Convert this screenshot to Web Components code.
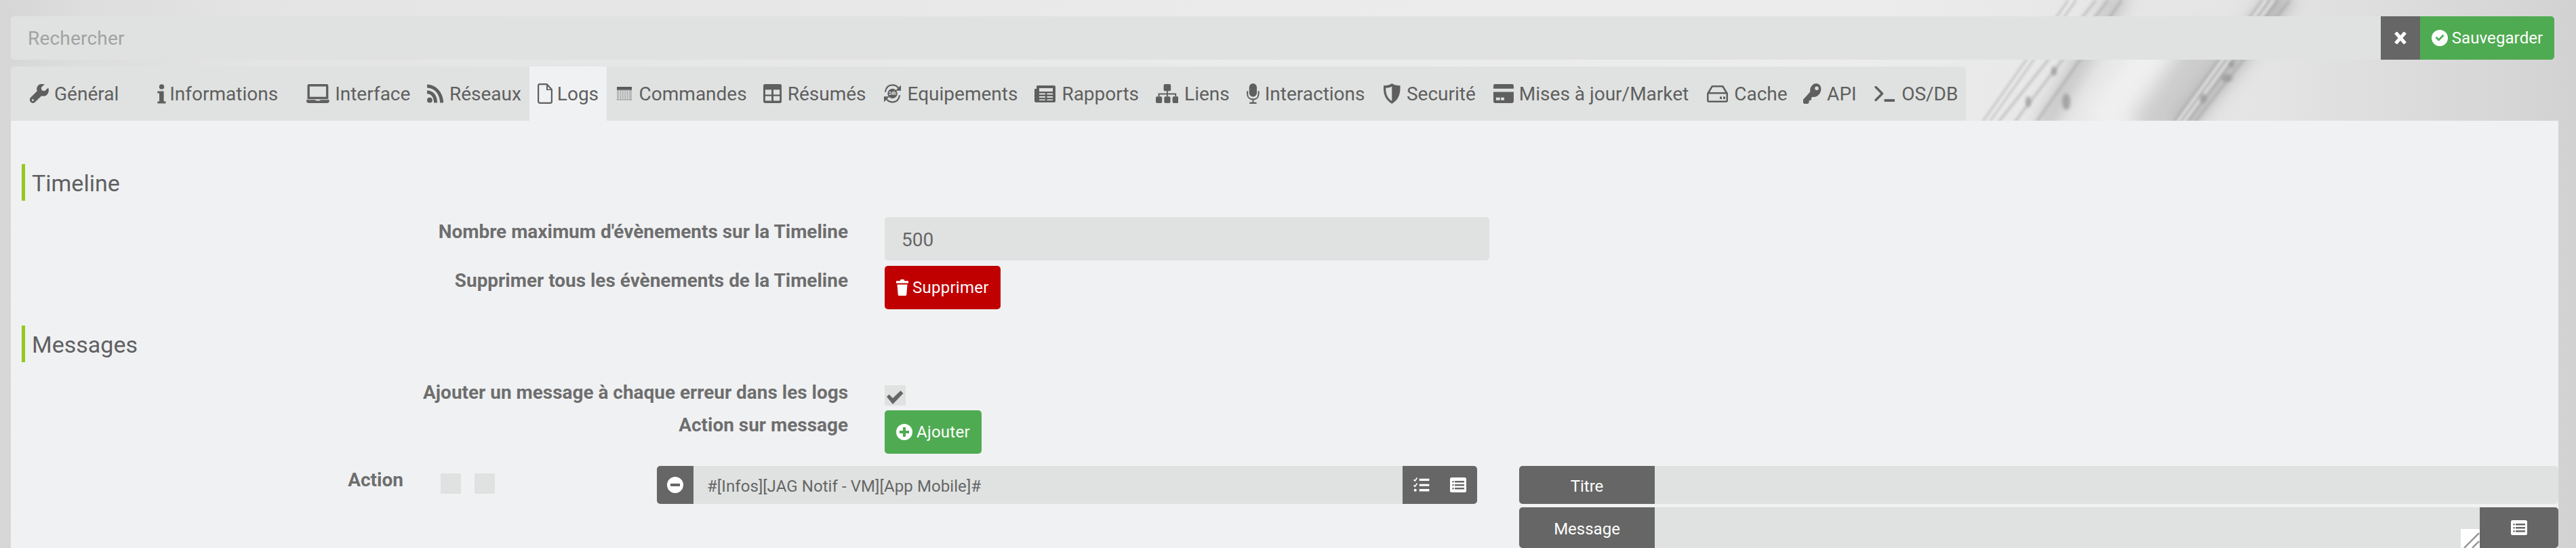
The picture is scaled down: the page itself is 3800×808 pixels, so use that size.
<!DOCTYPE html>
<html lang="fr"><head><meta charset="utf-8"><title>Configuration</title>
<style>
html,body{margin:0;height:808px;overflow:hidden;background:#dcdcdc}
body{font-family:Roboto,"Liberation Sans",sans-serif;color:#666}
</style></head><body>
<app-shell>
  <app-backdrop></app-backdrop>
  <search-bar placeholder="Rechercher"></search-bar>
  <tab-bar>
    <app-tab icon="wrench" style="--pl:27px;--iw:29px;--g:8px;--pr:12px">Général</app-tab>
    <app-tab icon="info" style="--pl:45px;--iw:13px;--g:5px;--pr:12px">Informations</app-tab>
    <app-tab icon="laptop" style="--pl:29px;--iw:35px;--g:8px;--pr:11.500px">Interface</app-tab>
    <app-tab icon="rss" style="--pl:13px;--iw:25px;--g:8px;--pr:12px">Réseaux</app-tab>
    <app-tab icon="file" active style="--pl:12px;--iw:22px;--g:7px;--pr:11.500px">Logs</app-tab>
    <app-tab icon="calendar" style="--pl:15px;--iw:22px;--g:11px;--pr:13px">Commandes</app-tab>
    <app-tab icon="table" style="--pl:11px;--iw:28px;--g:8px;--pr:12px">Résumés</app-tab>
    <app-tab icon="sync" style="--pl:13px;--iw:28px;--g:8px;--pr:12px">Equipements</app-tab>
    <app-tab icon="news" style="--pl:13px;--iw:31px;--g:9px;--pr:12px">Rapports</app-tab>
    <app-tab icon="sitemap" style="--pl:12px;--iw:35px;--g:8px;--pr:12px">Liens</app-tab>
    <app-tab icon="mic" style="--pl:13px;--iw:20px;--g:7px;--pr:13.500px">Interactions</app-tab>
    <app-tab icon="shield" style="--pl:13px;--iw:27px;--g:8px;--pr:12px">Securité</app-tab>
    <app-tab icon="card" style="--pl:14px;--iw:31px;--g:7px;--pr:12px">Mises à jour/Market</app-tab>
    <app-tab icon="hdd" style="--pl:15px;--iw:31px;--g:9px;--pr:12px">Cache</app-tab>
    <app-tab icon="key" style="--pl:10.500px;--iw:29px;--g:7px;--pr:12px">API</app-tab>
    <app-tab icon="terminal" style="--pl:11.500px;--iw:35px;--g:8px;--pr:12px">OS/DB</app-tab>
  </tab-bar>
  <main-panel>
    <section-title style="margin-top:64px">Timeline</section-title>
    <form-row label="Nombre maximum d'évènements sur la Timeline" style="margin-top:24px">
      <text-field value="500"></text-field>
    </form-row>
    <form-row label="Supprimer tous les évènements de la Timeline" style="margin-top:8px">
      <icon-button icon="trash" bg="#c00000">Supprimer</icon-button>
    </form-row>
    <section-title style="margin-top:24px">Messages</section-title>
    <form-row label="Ajouter un message à chaque erreur dans les logs" style="margin-top:25px;--lt:0px">
      <check-box checked style="margin-top:9px"></check-box>
    </form-row>
    <form-row label="Action sur message" style="margin-top:6px">
      <icon-button icon="plus" bg="#4fab52">Ajouter</icon-button>
    </form-row>
    <action-row></action-row>
  </main-panel>
</app-shell>
<script>
const ICONS={
wrench:['0 0 29 29',`<path d="M28.5 6.5c-.3-.6-.7-.7-1.100-.3l-4.800 4.500-4.300-1-1-4.200 4.700-4.700c.4-.4.200-.8-.3-1C17.500-1 13.500.3 11.700 3.300c-1.500 2.300-1.500 5.200-.6 7.400L1 20.800c-1.600 1.700-1.600 4.800.2 6.700 1.800 1.800 4.800 2 6.600.2L18 17.800c2.400.9 5.100.7 7.300-.8 2.800-2 4.400-6.200 3.200-10.500z"/><circle cx="4.600" cy="24.500" r="1.500" fill="#e0e2e1"/>`],
info:['0 0 13 29',`<circle cx="6.500" cy="3.900" r="3.700"/><path d="M.4 10.500h9.200v15H12.500V28.500H.4V25.500H3V13.500H.4z"/>`],
laptop:['0 0 35 29',`<path fill-rule="evenodd" d="M4 0h27a2.500 2.500 0 0 1 2.500 2.500V23H1.500V2.500A2.500 2.500 0 0 1 4 0zM5 3.500V19.500H30V3.500z"/><path d="M0 24h13.500l1.200 1.500h5.600L21.500 24H35v2c0 1.700-1.500 3-3 3H3c-1.500 0-3-1.300-3-3z"/>`],
rss:['0 0 25 29',`<circle cx="4" cy="24.500" r="4"/><path d="M0 9.500v5.300c6.200.2 10.300 4.800 10.500 13.700h5.200C15.500 17 9.500 9.800 0 9.500z"/><path d="M0 0.500v5.300C11.800 6.200 19.500 15.500 19.800 28.500H25C24.700 12.500 14 1 0 .5z"/>`],
file:['0 0 22 30',`<path fill="none" stroke="currentColor" stroke-width="2.200" stroke-linejoin="round" d="M3 1.100h10.500l7.400 7.900V26.500c0 1.300-.9 2.400-2.300 2.400H3.400c-1.300 0-2.300-1.100-2.300-2.400V3.500C1.100 2.200 1.800 1.100 3 1.100z"/><path d="M13 2v8h8l-2-1.500h-4V3z"/>`],
calendar:['0 0 22 20',`<rect width="22" height="20" fill="#a8a9a9"/><rect width="22" height="4.500" fill="#5a5a5a"/><path stroke="#e9eaea" stroke-width=".8" d="M0 7.500H22M0 10.500H22M0 13.500H22M0 16.500H22M3.500 4.500V20M7 4.500V20M10.500 4.500V20M14 4.500V20M17.500 4.500V20"/>`],
table:['0 0 28 29',`<path fill-rule="evenodd" d="M2.500 0h23A2.500 2.500 0 0 1 28 2.500v24a2.500 2.500 0 0 1-2.500 2.500h-23A2.500 2.500 0 0 1 0 26.500v-24A2.500 2.500 0 0 1 2.500 0zM3 8.500v7.500h9.500V8.500zM15.500 8.500v7.500H25V8.500zM3 18.500V25.500h9.500V18.500zM15.500 18.500V25.500H25V18.500z"/>`],
sync:['0 0 28 29',`<path fill="none" stroke="currentColor" stroke-width="2.300" d="M3 12C4 5.500 8 1.500 14 1.500 18 1.500 21 3 23.500 6.500"/><path d="M27 1.500v8.500h-8.500z"/><path fill="none" stroke="currentColor" stroke-width="2.300" d="M25 17C24 23.500 20 27.500 14 27.500 10 27.500 7 26 4.500 22.500"/><path d="M1 27.500v-8.500h8.500z"/><circle cx="14" cy="14.500" r="7.500"/><text x="14" y="16.800" font-family="Roboto" font-size="6.500" font-weight="700" text-anchor="middle" fill="#e0e2e1">24h</text>`],
news:['0 0 31 25',`<path fill-rule="evenodd" d="M3 1.500a1.500 1.500 0 0 1 1.500-1.500H29a2 2 0 0 1 2 2v21a2 2 0 0 1-2 2H2a2 2 0 0 1-2-2V5h3zM7 4v5h20V4zM7 11.500v2h9v-2zM18.500 11.500v2H27v-2zM7 16v2h9v-2zM18.500 16v2H27v-2zM7 20.500v1.500h9v-1.500zM18.500 20.500v1.500H27v-1.500z"/>`],
sitemap:['0 0 35 29',`<rect x="12" width="11" height="10.500" rx="2"/><rect y="19" width="9.500" height="10" rx="2"/><rect x="12.800" y="19" width="9.500" height="10" rx="2"/><rect x="25.500" y="19" width="9.500" height="10" rx="2"/><path fill="none" stroke="currentColor" stroke-width="2" d="M17.500 10v9M4.700 19v-4h25.600v4"/>`],
mic:['0 0 20 32',`<rect x="4" width="12" height="21" rx="6"/><path fill="none" stroke="currentColor" stroke-width="2.200" d="M1.200 12v4.500c0 5 3.500 8.500 8.800 8.500s8.800-3.500 8.800-8.500V12M10 25v5.500M4.500 30.800h11"/>`],
shield:['0 0 27 33',`<path fill-rule="evenodd" d="M13.500 0C17 2.500 22 3.500 27 3.500c.500 11-1 22-13.500 29.500C1 25.500-.5 14.500 0 3.500 5 3.500 10 2.500 13.500 0zM13.500 5C10.500 6.500 7 7.500 3.500 7.500 3.500 15 5 23.500 13.500 28.500z"/>`],
card:['0 0 31 29',`<path d="M2.500 0h26A2.500 2.500 0 0 1 31 2.500V7H0V2.500A2.500 2.500 0 0 1 2.500 0z"/><path fill-rule="evenodd" d="M0 12H31V26.500a2.500 2.500 0 0 1-2.500 2.500h-26A2.500 2.500 0 0 1 0 26.500zM4 20.500v4h6v-4zM11.500 20.500v4h5v-4z"/>`],
hdd:['0 0 31 25',`<path fill-rule="evenodd" d="M7 0H24L31 11.500V22a3 3 0 0 1-3 3H3a3 3 0 0 1-3-3V11.500zM8.500 2.500 4 10H27L22.500 2.500zM2.500 12.500V22.500H28.500V12.500z"/><rect x="19" y="16.500" width="3" height="3.500"/><rect x="24" y="16.500" width="3" height="3.500"/>`],
key:['0 0 29 33',`<path fill-rule="evenodd" d="M21 0c4.500 0 8 3.500 8 9 0 7-6 13.500-12 13-.7-.1-1.300-.2-1.900-.4L13 24v3.500H9.500V31l-2 2H1.500L0 31.500V26l11.500-12.500c-.2-.8-.3-1.600-.3-2.500C11.200 5.500 16 0 21 0zM22 5a3 3 0 1 0 0 6 3 3 0 0 0 0-6z"/>`],
terminal:['0 0 35 28',`<path fill="none" stroke="currentColor" stroke-width="4" stroke-linecap="round" stroke-linejoin="round" d="M2.500 3 13.500 14 2.500 25"/><rect x="17" y="23.500" width="18" height="4.500"/>`],
times:['0 0 18 18',`<path fill="none" stroke="currentColor" stroke-width="5" d="M2 1 16 17M16 1 2 17"/>`],
check:['0 0 24 24',`<path fill-rule="evenodd" d="M12 0a12 12 0 1 1 0 24 12 12 0 0 1 0-24zM5.500 11.800l1.900-2 3.100 3.100 6.100-6.100 1.900 2-8 8z"/>`],
trash:['0 0 18 24',`<path d="M6.500 0h5l1 2.200H18V5.500H0V2.200h5.500zM1.500 7.500h15l-1.200 15c-.1.900-.8 1.500-1.600 1.500H4.300c-.8 0-1.500-.6-1.600-1.500z"/>`],
plus:['0 0 24 24',`<path fill-rule="evenodd" d="M12 0a12 12 0 1 1 0 24 12 12 0 0 1 0-24zM10 5v5H5v4h5v5h4v-5h5v-4h-5V5z"/>`],
minus:['0 0 24 24',`<path fill-rule="evenodd" d="M12 0a12 12 0 1 1 0 24 12 12 0 0 1 0-24zM5 10v4h14v-4z"/>`],
tasks:['0 0 26 24',`<path fill="none" stroke="currentColor" stroke-width="1.800" d="M.5 3.500 2.500 5.500 6 .5M.5 12.500 2.500 14.500 6 9.500"/><path d="M9.500 2h16v3.500h-16zM9.500 10.500h16v3.500h-16zM9.500 18.500h16v4h-16z"/><circle cx="3" cy="20.500" r="2.200"/>`],
listalt:['0 0 24 22',`<path fill-rule="evenodd" d="M2.500 0h19A2.500 2.500 0 0 1 24 2.500v17a2.500 2.500 0 0 1-2.500 2.500h-19A2.500 2.500 0 0 1 0 19.500v-17A2.500 2.500 0 0 1 2.500 0zM7 5v2.500h14V5zM7 10v2.500h14V10zM7 15v2.500h14V15zM4.500 5a1.300 1.300 0 1 0 0 2.600 1.300 1.300 0 0 0 0-2.600zM4.500 10a1.300 1.300 0 1 0 0 2.600 1.300 1.300 0 0 0 0-2.600zM4.500 15a1.300 1.300 0 1 0 0 2.600 1.300 1.300 0 0 0 0-2.600z"/>`]
};
function icon(name,h){const [vb,body]=ICONS[name];const [,,w,ht]=vb.split(' ').map(Number);
 return `<svg xmlns="http://www.w3.org/2000/svg" viewBox="${vb}" width="${h*w/ht}" height="${h}" fill="currentColor" style="display:block;flex:none">${body}</svg>`}
function def(tag,fn){customElements.define(tag,class extends HTMLElement{connectedCallback(){if(this.shadowRoot)return;const s=this.attachShadow({mode:'open'});s.innerHTML=fn(this)}})}

def('app-shell',()=>`<style>:host{display:block;position:relative;height:808px;overflow:hidden;padding:24px 26px 0 16px;box-sizing:border-box}
::slotted(*){position:relative}</style><slot></slot>`);

def('app-backdrop',()=>`<style>:host{display:block;position:absolute!important;inset:0;overflow:hidden}svg{display:block}</style>
<svg xmlns="http://www.w3.org/2000/svg" width="3800" height="808" viewBox="0 0 3800 808">
<defs><linearGradient id="g" x1="0" x2="1" y1="0" y2="0">
<stop offset="0" stop-color="#d6d6d6"/><stop offset=".03" stop-color="#dddddd"/><stop offset=".1" stop-color="#e4e4e4"/><stop offset=".5" stop-color="#ebebeb"/><stop offset=".72" stop-color="#ececec"/><stop offset=".88" stop-color="#e4e4e4"/><stop offset="1" stop-color="#d2d2d2"/></linearGradient>
<filter id="b1" x="-20%" y="-20%" width="140%" height="140%"><feGaussianBlur stdDeviation="2"/></filter><filter id="b2" x="-30%" y="-30%" width="160%" height="160%"><feGaussianBlur stdDeviation="12"/></filter></defs>
<rect width="3800" height="808" fill="url(#g)"/>
<g filter="url(#b2)" fill="none">
<path stroke="#a8a8a8" stroke-width="34" opacity=".75" d="M3212 190 3372 -10"/>
<path stroke="#acacac" stroke-width="24" opacity=".65" d="M3012 190 3130 -10"/>
<path stroke="#bcbcbc" stroke-width="70" opacity=".6" d="M3160 190 3260 60"/>
<path stroke="#f4f4f4" stroke-width="60" opacity=".7" d="M3100 190 3190 60"/>
</g>
<g filter="url(#b1)" fill="none" stroke="#999" stroke-width="1.800">
<path d="M2925 180 3052 0M2934 180 3062 0M2948 180 3092 0M2972 180 3110 0M3004 180 3130 0"/>
<path d="M3207 180 3338 0M3216 180 3348 0M3226 180 3360 0M3238 180 3378 0"/>
<path stroke="#f8f8f8" stroke-width="2.500" d="M3212 180 3343 0M2930 180 3057 0M3221 180 3354 0"/>
</g>
<g filter="url(#b1)" fill="#9a9a9a" opacity=".8"><ellipse cx="3030" cy="105" rx="4" ry="7"/><ellipse cx="2992" cy="150" rx="4" ry="8"/><ellipse cx="3048" cy="150" rx="6" ry="12"/><ellipse cx="3285" cy="115" rx="8" ry="6"/><ellipse cx="3250" cy="145" rx="5" ry="7"/><ellipse cx="3292" cy="95" rx="4" ry="5"/></g>
</svg>`);

def('search-bar',el=>`<style>:host{display:flex;height:64px;margin-right:6px}
.i{flex:1;background:#e0e2e1;border-radius:5px 0 0 5px;display:flex;align-items:center;padding:2px 0 0 25px;font-size:28px;letter-spacing:.2px;color:#a2a2a2;line-height:1}
button{border:0;margin:0;padding:0;font:inherit;color:#fff;display:flex;align-items:center;justify-content:center}
.x{width:58px;background:#666}
.s{width:198px;background:#4fab52;border-radius:0 5px 5px 0;font-size:24px;gap:6px;letter-spacing:.1px}</style>
<div class="i">${el.getAttribute('placeholder')}</div>
<button class="x">${icon('times',18)}</button>
<button class="s">${icon('check',24)}<span>Sauvegarder</span></button>`);

def('tab-bar',()=>`<style>:host{display:flex;width:fit-content;height:80px;margin-top:10px;background:#e0e2e1;border-radius:5px 5px 0 0}</style><slot></slot>`);

def('app-tab',el=>`<style>:host{display:flex;align-items:center;box-sizing:border-box;height:80px;padding:0 var(--pr) 0 var(--pl);font-size:28px;color:#5f5f5f;white-space:nowrap;position:relative}
:host([active]){background:#f0f1f3}
:host([active])::after{content:"";position:absolute;left:0;right:0;bottom:-2px;height:2px;background:#94c81e}
.ic{width:var(--iw);margin-right:var(--g);display:flex;justify-content:center;flex:none}</style>
<span class="ic">${icon(el.getAttribute('icon'),{info:29,file:30,calendar:20,news:25,hdd:25,mic:30,shield:30,key:30,terminal:24}[el.getAttribute('icon')]||28)}</span><slot></slot>`);

def('main-panel',()=>`<style>:host{display:block;background:#f0f1f3;height:630px;padding-left:16px;box-sizing:border-box;overflow:hidden}
</style><slot></slot>`);

def('section-title',()=>`<style>:host{display:block;height:54px;line-height:56px;border-left:5px solid #94c81e;padding-left:10px;font-size:34px;font-weight:400;color:#606060;box-sizing:border-box}</style><slot></slot>`);

def('form-row',el=>`<style>:host{display:flex;align-items:flex-start}
label{width:1219px;text-align:right;font-size:27.950px;font-weight:700;color:#6e6e6e;line-height:40px;flex:none;padding-top:var(--lt,2px)}
.c{margin-left:54px;flex:none}</style><label>${el.getAttribute('label')}</label><div class="c"><slot></slot></div>`);

def('text-field',el=>`<style>:host{display:flex;align-items:center;width:892px;height:64px;background:#e0e2e1;border-radius:5px;padding:2px 0 0 25px;box-sizing:border-box;font-size:28px;color:#666}</style>${el.getAttribute('value')}`);

def('icon-button',el=>`<style>:host{display:inline-flex;align-items:center;height:64px;padding:0 17px;gap:6px;border-radius:5px;color:#fff;font-size:24px;letter-spacing:.25px;background:${el.getAttribute('bg')};box-sizing:border-box;vertical-align:top}</style>${icon(el.getAttribute('icon'),24)}<slot></slot>`);

def('check-box',el=>`<style>:host{display:block;width:31px;height:30px;background:#e0e2e1;position:relative}
svg{position:absolute;left:0;top:7px}</style>${el.hasAttribute('checked')?`<svg xmlns="http://www.w3.org/2000/svg" width="30" height="22" viewBox="0 0 30 22"><path fill="#666" d="M3 10 6.500 6.500 12 12 23.500 1 27.500 5 12 21z"/></svg>`:''}`);

def('action-row',()=>`<style>:host{display:flex;align-items:flex-start;margin-top:18px}
.l{width:563px;text-align:right;font-size:28px;font-weight:700;color:#6e6e6e;line-height:40px;margin-top:1px;flex:none}
.checks{display:flex;gap:20px;margin-left:55px;margin-top:11px;flex:none;width:319px}
.box{width:30px;height:30px;background:#e0e2e1}
.grp{display:flex;width:1210px;height:56px;flex:none}
.btn{background:#666;color:#fff;display:flex;align-items:center;justify-content:center}
.m{width:54px;border-radius:5px 0 0 5px}
.t{flex:1;background:#e0e2e1;font-size:24px;color:#666;line-height:60px;padding-left:20px;letter-spacing:.08px}
.r{width:110px;border-radius:0 5px 5px 0;gap:30px}
.side{flex:1;margin-left:62px;display:flex;flex-direction:column;gap:5px}
.line{display:flex}
.lab{width:200px;font-size:24px;border-radius:5px 0 0 5px;padding-top:4px;box-sizing:border-box}
.f{flex:1;background:#e0e2e1;position:relative}
.rb{width:116px;border-radius:0 5px 5px 0}
.h{position:absolute;right:0;bottom:0;width:28px;height:28px;background:#fff}
</style>
<div class="l">Action</div>
<div class="checks"><div class="box"></div><div class="box"></div></div>
<div class="grp"><div class="btn m">${icon('minus',24)}</div><div class="t">#[Infos][JAG Notif - VM][App Mobile]#</div>
<div class="btn r">${icon('tasks',22)}${icon('listalt',22)}</div></div>
<div class="side">
<div class="line" style="height:56px"><div class="btn lab">Titre</div><div class="f" style="border-radius:0 5px 5px 0"></div></div>
<div class="line" style="height:60px"><div class="btn lab">Message</div><div class="f"><div class="h"><svg xmlns="http://www.w3.org/2000/svg" width="28" height="28" viewBox="0 0 28 28" style="display:block"><path stroke="#999" stroke-width="2.500" fill="none" d="M5 28 27 6M17 28 27 18"/></svg></div></div><div class="btn rb">${icon('listalt',22)}</div></div>
</div>`);
</script>
</body></html>
